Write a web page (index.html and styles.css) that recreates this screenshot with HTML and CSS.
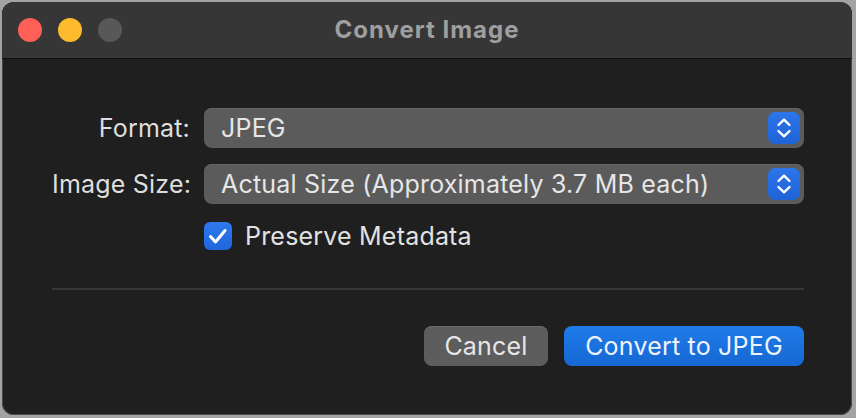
FILE: index.html
```html
<!DOCTYPE html>
<html>
<head>
<meta charset="utf-8">
<link rel="stylesheet" href="styles.css">
</head>
<body>
<div class="window">
  <div class="titlebar">
    <div class="lights">
      <span class="light red"></span>
      <span class="light yellow"></span>
      <span class="light gray"></span>
    </div>
    <div class="title">Convert Image</div>
  </div>
  <div class="content">
    <div class="form">
      <div class="label">Format:</div>
      <div class="popup">
        <span class="popup-text">JPEG</span>
        <span class="stepper">
          <svg width="32" height="32" viewBox="0 0 32 32"><path d="M10.5 13 L16 7.6 L21.5 13 M10.5 19 L16 24.4 L21.5 19" fill="none" stroke="#fff" stroke-width="2.4" stroke-linecap="round" stroke-linejoin="round"/></svg>
        </span>
      </div>
      <div class="label">Image Size:</div>
      <div class="popup">
        <span class="popup-text">Actual Size (Approximately 3.7 MB each)</span>
        <span class="stepper">
          <svg width="32" height="32" viewBox="0 0 32 32"><path d="M10.5 13 L16 7.6 L21.5 13 M10.5 19 L16 24.4 L21.5 19" fill="none" stroke="#fff" stroke-width="2.4" stroke-linecap="round" stroke-linejoin="round"/></svg>
        </span>
      </div>
      <div></div>
      <label class="check-row">
        <span class="checkbox">
          <svg width="28" height="28" viewBox="0 0 28 28"><path d="M6.5 14.5 L11.5 20 L21 8.5" fill="none" stroke="#fff" stroke-width="3" stroke-linecap="round" stroke-linejoin="round"/></svg>
        </span>
        <span class="check-text">Preserve Metadata</span>
      </label>
    </div>
    <div class="separator"></div>
    <div class="buttons">
      <button class="btn cancel">Cancel</button>
      <button class="btn primary">Convert to JPEG</button>
    </div>
  </div>
</div>
</body>
</html>
```

FILE: styles.css
```css
html, body {
  margin: 0;
  padding: 0;
}
body {
  width: 856px;
  height: 418px;
  background: #a3a3a3;
  font-family: Inter, "Liberation Sans", sans-serif;
  overflow: hidden;
}
.window {
  margin: 2px 0 0 2px;
  width: 850px;
  height: 413px;
  border-radius: 12px;
  background: #1f1f1f;
  overflow: hidden;
  display: flex;
  flex-direction: column;
  box-shadow: inset 0 0 0 1px #4a4a4a;
}
.titlebar {
  height: 56px;
  background: #363636;
  border-bottom: 1px solid #0f0f0f;
  position: relative;
  display: flex;
  align-items: center;
  justify-content: center;
  flex-shrink: 0;
}
.lights {
  position: absolute;
  left: 16px;
  top: 16px;
  display: flex;
  gap: 16px;
}
.light {
  width: 24px;
  height: 24px;
  border-radius: 50%;
  display: block;
}
.red { background: #fe5f57; }
.yellow { background: #febb2e; }
.gray { background: #585858; }
.title {
  color: #9f9f9f;
  font-size: 24px;
  font-weight: 700;
  letter-spacing: 1px;
  margin-top: -1px;
}
.content {
  padding: 49px 48px 0 50px;
}
.form {
  display: grid;
  grid-template-columns: 138px 1fr;
  column-gap: 14px;
  row-gap: 16px;
  align-items: center;
}
.label {
  text-align: right;
  color: #dedede;
  font-size: 25px;
  letter-spacing: 0.2px;
  white-space: nowrap;
}
.popup {
  height: 40px;
  border-radius: 8px;
  background: #5b5b5b;
  display: flex;
  align-items: center;
  justify-content: space-between;
  padding: 0 4px 0 17px;
  box-shadow: inset 0 1px 0 #666;
}
.popup-text {
  color: #e6e6e6;
  font-size: 25px;
  letter-spacing: 0.2px;
}
.stepper {
  width: 32px;
  height: 32px;
  border-radius: 7px;
  background: linear-gradient(#2d75ea, #1f63d6);
  display: flex;
}
.check-row {
  display: flex;
  align-items: center;
  gap: 13px;
  margin-top: 2px;
  height: 28px;
}
.checkbox {
  width: 28px;
  height: 28px;
  border-radius: 6px;
  background: linear-gradient(#2f78ee, #2066dc);
  display: flex;
}
.check-text {
  color: #e2e2e2;
  font-size: 25px;
  line-height: 28px;
  letter-spacing: 0.2px;
}
.separator {
  height: 2px;
  background: #363636;
  margin-top: 38px;
}
.buttons {
  display: flex;
  justify-content: flex-end;
  gap: 16px;
  margin-top: 36px;
}
.btn {
  height: 40px;
  border: none;
  border-radius: 8px;
  font-family: Inter, "Liberation Sans", sans-serif;
  font-size: 25px;
  letter-spacing: 0.2px;
  padding: 0;
}
.cancel {
  width: 124px;
  background: #5d5d5d;
  color: #e6e6e6;
  box-shadow: inset 0 1px 0 #6a6a6a;
}
.primary {
  width: 240px;
  background: linear-gradient(#1f7ce9, #1668d2);
  color: #eef3fd;
}
```
